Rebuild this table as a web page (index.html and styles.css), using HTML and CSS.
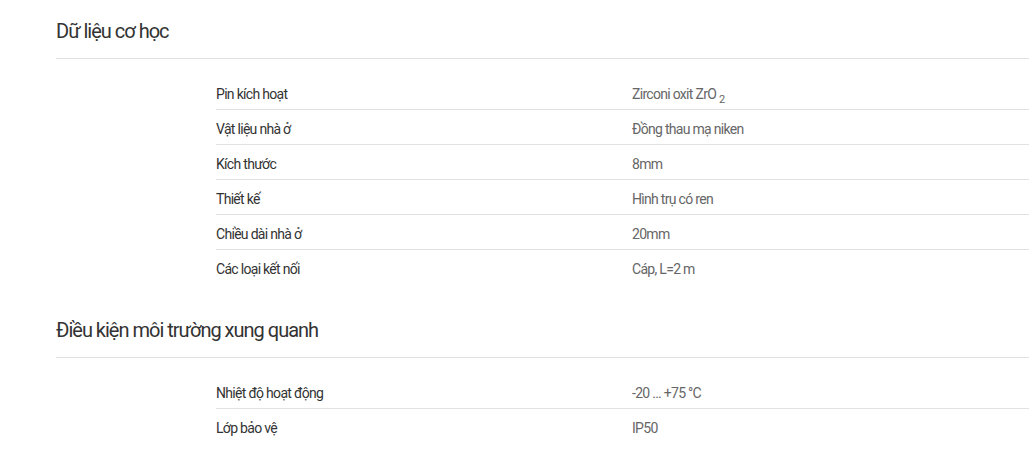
FILE: index.html
```html
<!DOCTYPE html>
<html lang="vi">
<head>
<meta charset="utf-8">
<title>Thông số kỹ thuật</title>
<link rel="stylesheet" href="styles.css">
</head>
<body>
<div class="page">
  <section class="spec">
    <div class="spec-head">
      <h2 class="spec-title">Dữ liệu cơ học</h2>
      <svg class="chev" width="12" height="8" viewBox="0 0 12 8"><path d="M1 7 L6 2 L11 7" fill="none" stroke="#888" stroke-width="1.5"/></svg>
    </div>
    <div class="spec-table">
      <div class="row"><div class="label">Pin kích hoạt</div><div class="value">Zirconi oxit ZrO <sub>2</sub></div></div>
      <div class="row"><div class="label">Vật liệu nhà ở</div><div class="value">Đồng thau mạ niken</div></div>
      <div class="row"><div class="label">Kích thước</div><div class="value">8mm</div></div>
      <div class="row"><div class="label">Thiết kế</div><div class="value">Hình trụ có ren</div></div>
      <div class="row"><div class="label">Chiều dài nhà ở</div><div class="value">20mm</div></div>
      <div class="row"><div class="label">Các loại kết nối</div><div class="value">Cáp, L=2 m</div></div>
    </div>
  </section>
  <section class="spec">
    <div class="spec-head">
      <h2 class="spec-title">Điều kiện môi trường xung quanh</h2>
      <svg class="chev" width="12" height="8" viewBox="0 0 12 8"><path d="M1 7 L6 2 L11 7" fill="none" stroke="#888" stroke-width="1.5"/></svg>
    </div>
    <div class="spec-table">
      <div class="row"><div class="label">Nhiệt độ hoạt động</div><div class="value">-20 … +75 °C</div></div>
      <div class="row"><div class="label">Lớp bảo vệ</div><div class="value">IP50</div></div>
    </div>
  </section>
</div>
</body>
</html>
```

FILE: styles.css
```css
html, body {
  margin: 0;
  padding: 0;
  background: #fff;
  overflow: hidden;
}
body {
  font-family: Roboto, "Liberation Sans", Arial, sans-serif;
  color: #333;
}
.page {
  padding-left: 56px;
  margin-right: -16px;
}
.spec {
  display: flex;
  flex-direction: column;
}
.spec-head {
  display: flex;
  align-items: center;
  justify-content: space-between;
  padding: 17px 0 13px;
  border-bottom: 1px solid #e2e2e2;
}
.spec-title {
  margin: 0;
  font-size: 20px;
  line-height: 28px;
  font-weight: 400;
  letter-spacing: -1px;
  color: #333;
}
.chev {
  margin-right: 4px;
  margin-top: -4px;
}
.spec-table {
  margin: 16px 0 14px 160px;
}
.row {
  display: flex;
  box-sizing: border-box;
  height: 35px;
  padding-top: 4px;
  align-items: center;
  border-bottom: 1px solid #e2e2e2;
  font-size: 14px;
  letter-spacing: -0.7px;
}
.row:last-child {
  border-bottom-color: transparent;
}
.label {
  width: 416px;
  color: #333;
}
.value {
  color: #666;
}
.value sub {
  font-size: 11px;
  vertical-align: -4px;
  line-height: 0;
  letter-spacing: 0;
}
```
